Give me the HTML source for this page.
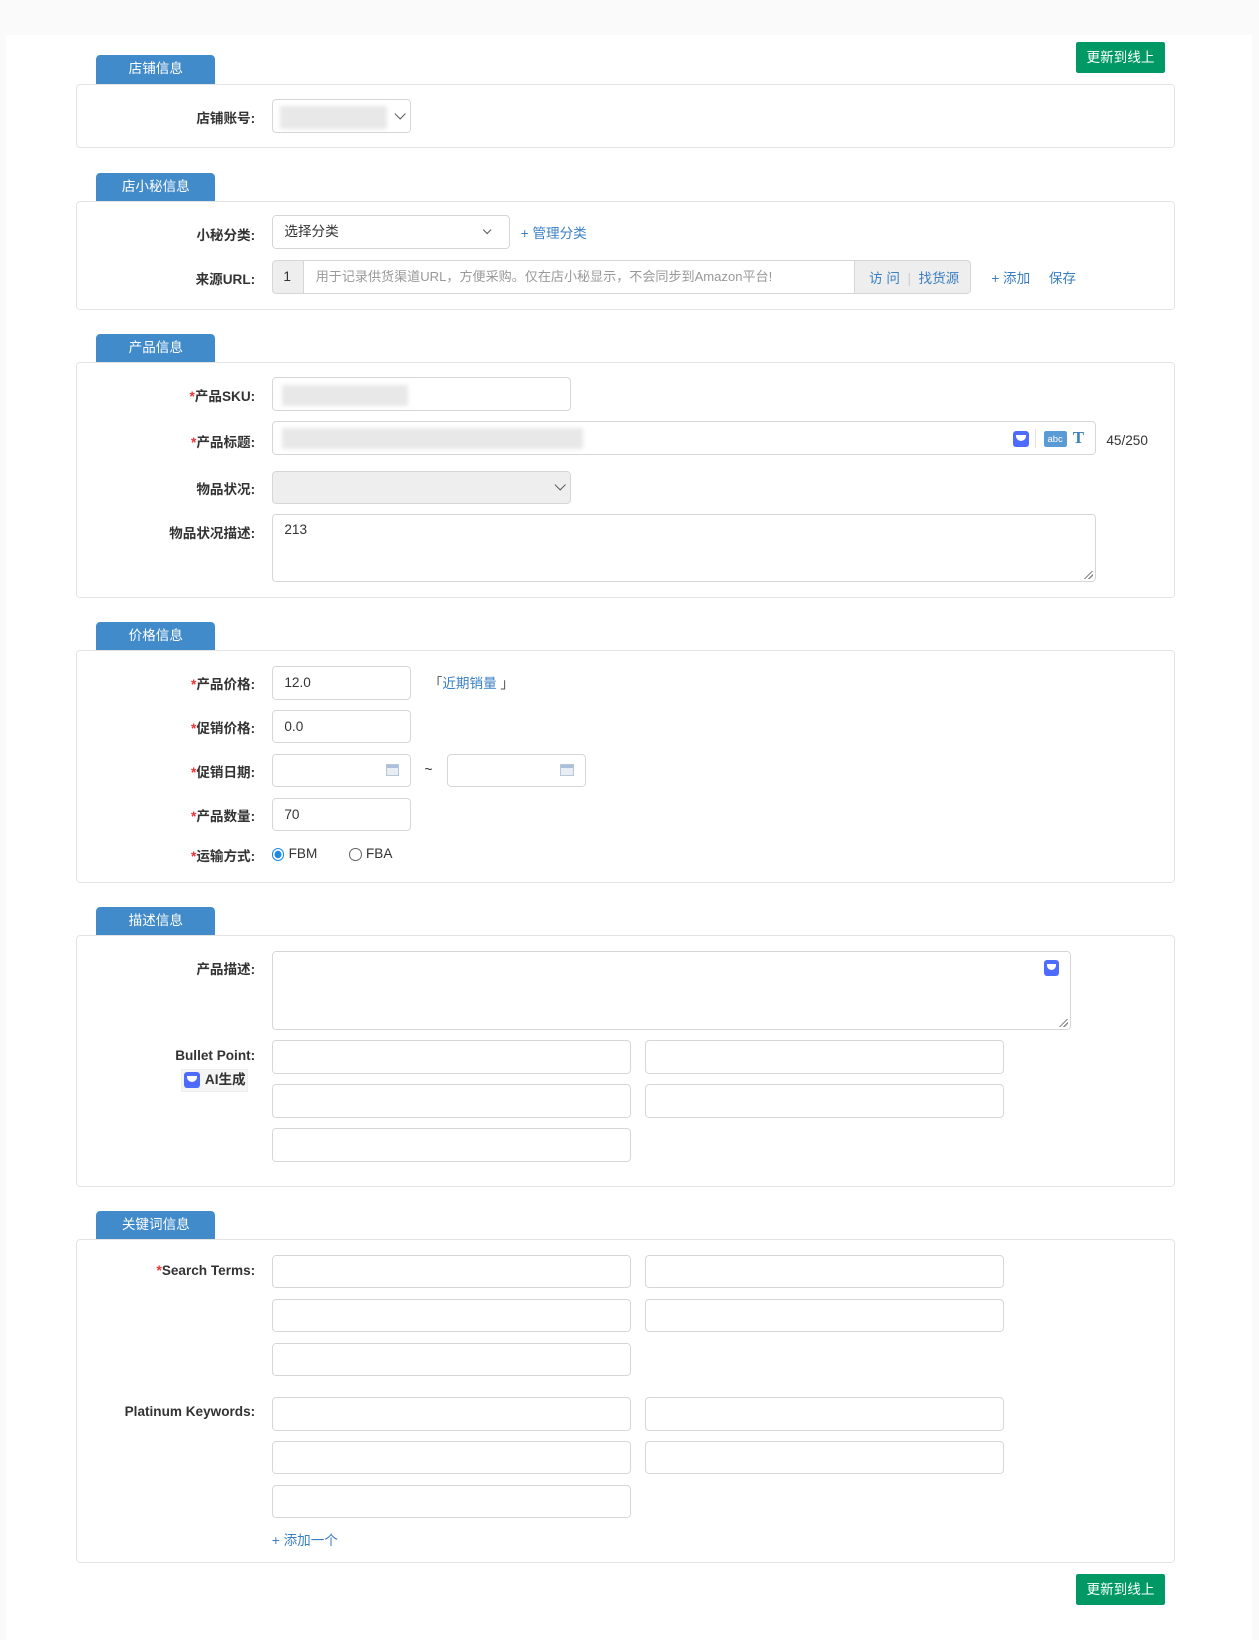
<!DOCTYPE html>
<html><head><meta charset="utf-8">
<style>
*{box-sizing:border-box;margin:0;padding:0}
html,body{width:1259px;height:1640px;overflow:hidden;background:#fafafa}
#w{zoom:1.0457;position:relative;width:1204px;height:1568px;font-family:"Liberation Sans","Noto Sans CJK SC",sans-serif;font-size:13px;color:#333}
#panel{position:absolute;left:6px;top:33px;width:1191px;height:1535px;background:#fff}
.a{position:absolute}
.tab{position:absolute;left:92px;width:114px;height:27px;background:#428bca;color:#fff;text-align:center;line-height:27px;border-radius:4px 4px 0 0;font-size:13px}
.box{position:absolute;left:73px;width:1051px;border:1px solid #e3e3e3;border-radius:4px;background:#fff}
.lbl{position:absolute;right:960px;font-weight:bold;color:#333;white-space:nowrap;text-align:right;margin-top:-2px}
.lbl i{color:#e33;font-style:normal}
.in{position:absolute;border:1px solid #d6d6d6;border-radius:4px;background:#fff;height:32px;line-height:30px;padding-left:11px;color:#333}
.btn{position:absolute;left:1029px;width:85px;height:30px;background:#009966;color:#fff;text-align:center;line-height:30px;border-radius:2px}
.blue{color:#3a7fc2}
div.blue{margin-top:-2px}
.blur{position:absolute;background:#e8e8e8;filter:blur(2px)}
.chev{position:absolute;width:8px;height:8px;border-right:1.5px solid #555;border-bottom:1.5px solid #555;transform:rotate(45deg)}
.ic{position:absolute;width:15px;height:15px;background:#4d6bfe;border-radius:3px}
.ic:after{content:"";position:absolute;left:3px;top:4px;width:9px;height:6px;border-radius:0 0 5px 5px;background:#fff}
.cal{position:absolute;width:13px;height:11px;border:1px solid #b8c6d8;background:linear-gradient(#a9bfdc 0 3px,#e9eef5 3px)}
.rs{position:absolute;right:2px;bottom:2px;width:8px;height:8px;background:linear-gradient(135deg,transparent 45%,#888 45% 55%,transparent 55% 70%,#888 70% 80%,transparent 80%)}
</style></head><body><div id="w">
<div id="panel"></div>
<div class="btn" style="top:40px">更新到线上</div>
<div class="btn" style="top:1505px">更新到线上</div>

<div class="tab" style="top:53px">店铺信息</div>
<div class="box" style="top:80px;height:62px"></div>
<div class="lbl" style="top:104px">店铺账号:</div>
<div class="in" style="left:260px;top:95px;width:133px"></div>
<div class="blur" style="left:268px;top:101px;width:102px;height:22px"></div>
<div class="chev" style="left:379px;top:105px"></div>

<div class="tab" style="top:165px">店小秘信息</div>
<div class="box" style="top:192px;height:104px"></div>
<div class="lbl" style="top:216px">小秘分类:</div>
<div class="in" style="left:260px;top:206px;width:228px">选择分类</div>
<div class="chev" style="left:463px;top:217px;width:6px;height:6px"></div>
<div class="a blue" style="left:498px;top:214px">+ 管理分类</div>
<div class="lbl" style="top:258px">来源URL:</div>
<div class="in" style="left:260px;top:249px;width:669px;background:#eee;padding:0"></div>
<div class="a" style="left:290px;top:250px;width:528px;height:30px;background:#fff;border-left:1px solid #d6d6d6;border-right:1px solid #d6d6d6;color:#999;line-height:30px;padding-left:11px;font-size:12.5px">用于记录供货渠道URL，方便采购。仅在店小秘显示，不会同步到Amazon平台!</div>
<div class="a" style="left:271px;top:257px">1</div>
<div class="a blue" style="left:831px;top:257px">访 问 <span style="color:#ccc">&nbsp;|&nbsp;</span> 找货源</div>
<div class="a blue" style="left:948px;top:257px">+ 添加</div>
<div class="a blue" style="left:1003px;top:257px">保存</div>

<div class="tab" style="top:319px">产品信息</div>
<div class="box" style="top:346px;height:226px"></div>
<div class="lbl" style="top:370px"><i>*</i>产品SKU:</div>
<div class="in" style="left:260px;top:361px;width:286px"></div>
<div class="blur" style="left:270px;top:368px;width:120px;height:20px"></div>
<div class="lbl" style="top:414px"><i>*</i>产品标题:</div>
<div class="in" style="left:260px;top:403px;width:788px"></div>
<div class="blur" style="left:270px;top:409px;width:288px;height:20px"></div>
<div class="ic" style="left:969px;top:412px"></div>
<div class="a" style="left:990px;top:410px;width:1px;height:18px;background:#e3e3e3"></div>
<div class="a" style="left:998px;top:412px;width:22px;height:15px;background:#5b9bd5;border-radius:2px;color:#fff;font-size:9px;line-height:15px;text-align:center">abc</div>
<div class="a" style="left:1026px;top:409px;color:#3a7fc2;font-weight:bold;font-size:16px;font-family:'Liberation Serif',serif">T</div>
<div class="a" style="left:1058px;top:414px">45/250</div>
<div class="lbl" style="top:459px">物品状况:</div>
<div class="in" style="left:260px;top:450px;width:286px;background:#eee"></div>
<div class="chev" style="left:532px;top:460px"></div>
<div class="lbl" style="top:501px">物品状况描述:</div>
<div class="in" style="left:260px;top:492px;width:788px;height:65px;line-height:28px">213<div class="rs"></div></div>

<div class="tab" style="top:595px">价格信息</div>
<div class="box" style="top:622px;height:222px"></div>
<div class="lbl" style="top:646px"><i>*</i>产品价格:</div>
<div class="in" style="left:260px;top:637px;width:133px">12.0</div>
<div class="a" style="left:410px;top:643px"><span style="color:#555">「</span><span class="blue">近期销量</span><span style="color:#555"> 」</span></div>
<div class="lbl" style="top:688px"><i>*</i>促销价格:</div>
<div class="in" style="left:260px;top:679px;width:133px">0.0</div>
<div class="lbl" style="top:730px"><i>*</i>促销日期:</div>
<div class="in" style="left:260px;top:721px;width:133px"></div>
<div class="cal" style="left:369px;top:731px"></div>
<div class="a" style="left:406px;top:729px">~</div>
<div class="in" style="left:427px;top:721px;width:133px"></div>
<div class="cal" style="left:536px;top:731px"></div>
<div class="lbl" style="top:772px"><i>*</i>产品数量:</div>
<div class="in" style="left:260px;top:763px;width:133px">70</div>
<div class="lbl" style="top:810px"><i>*</i>运输方式:</div>
<div class="a" style="left:260px;top:811px;width:12px;height:12px;border:1px solid #1e88e5;border-radius:50%;background:radial-gradient(#1e88e5 3px,#fff 3.5px)"></div>
<div class="a" style="left:276px;top:809px">FBM</div>
<div class="a" style="left:334px;top:811px;width:12px;height:12px;border:1px solid #666;border-radius:50%"></div>
<div class="a" style="left:350px;top:809px">FBA</div>

<div class="tab" style="top:867px">描述信息</div>
<div class="box" style="top:894px;height:241px"></div>
<div class="lbl" style="top:918px">产品描述:</div>
<div class="in" style="left:260px;top:909px;width:764px;height:76px"><div class="rs"></div></div>
<div class="ic" style="left:998px;top:918px"></div>
<div class="lbl" style="top:1004px">Bullet Point:</div>
<div class="a" style="left:173px;top:1022px;width:64px;height:22px;background:#f5f5f5;border:1px solid #eee;font-weight:bold;line-height:20px;padding-left:22px">AI生成</div>
<div class="ic" style="left:176px;top:1025px"></div>
<div class="in" style="left:260px;top:995px;width:343px"></div>
<div class="in" style="left:617px;top:995px;width:343px"></div>
<div class="in" style="left:260px;top:1037px;width:343px"></div>
<div class="in" style="left:617px;top:1037px;width:343px"></div>
<div class="in" style="left:260px;top:1079px;width:343px"></div>

<div class="tab" style="top:1158px">关键词信息</div>
<div class="box" style="top:1185px;height:310px"></div>
<div class="lbl" style="top:1210px"><i>*</i>Search Terms:</div>
<div class="in" style="left:260px;top:1200px;width:343px"></div>
<div class="in" style="left:617px;top:1200px;width:343px"></div>
<div class="in" style="left:260px;top:1242px;width:343px"></div>
<div class="in" style="left:617px;top:1242px;width:343px"></div>
<div class="in" style="left:260px;top:1284px;width:343px"></div>
<div class="lbl" style="top:1345px">Platinum Keywords:</div>
<div class="in" style="left:260px;top:1336px;width:343px"></div>
<div class="in" style="left:617px;top:1336px;width:343px"></div>
<div class="in" style="left:260px;top:1378px;width:343px"></div>
<div class="in" style="left:617px;top:1378px;width:343px"></div>
<div class="in" style="left:260px;top:1420px;width:343px"></div>
<div class="a blue" style="left:260px;top:1464px">+ 添加一个</div>
</div></body></html>
